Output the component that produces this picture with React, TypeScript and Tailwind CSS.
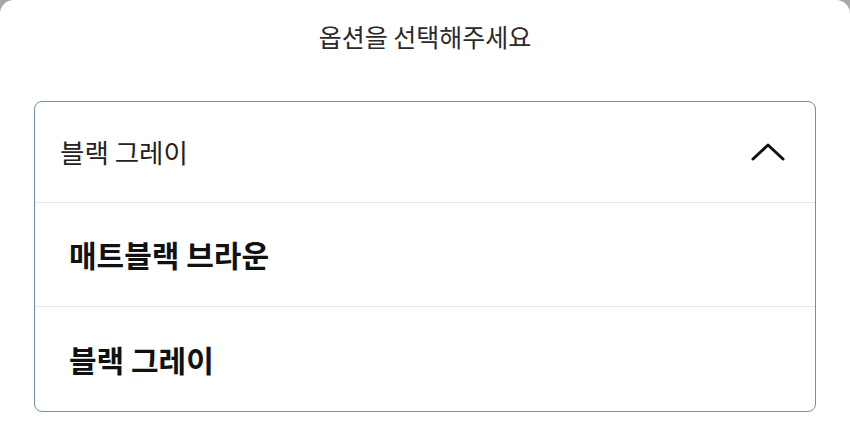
const options = ['매트블랙 브라운', '블랙 그레이'];

export default function App() {
  return (
    <div
      className="w-[850px] h-[436px] bg-[#a8a8a8] overflow-hidden"
      style={{ fontFamily: '"Noto Sans CJK KR", "Noto Sans", sans-serif' }}
    >
      <div className="h-full bg-white rounded-t-[14px] flex flex-col">
        <div className="h-[74px] flex items-center justify-center">
          <h2 className="text-[25px] text-[#2a2a2a] font-normal">옵션을 선택해주세요</h2>
        </div>
        <div className="mx-[34px] mt-[27px] border border-[#6f90ad] rounded-[8px] flex flex-col">
          <button className="h-[101px] flex items-center justify-between pl-[25px] pr-[30px] border-b border-[#e6e6e6]">
            <span className="text-[26.5px] text-[#222] font-normal">블랙 그레이</span>
            <svg width="34" height="20" viewBox="0 0 34 20" fill="none">
              <polyline points="2,17 17,3 32,17" stroke="#111" strokeWidth="3" strokeLinecap="round" strokeLinejoin="round" />
            </svg>
          </button>
          {options.map((opt, i) => (
            <div
              key={opt}
              className={`h-[104px] flex items-center pl-[34px] ${i < options.length - 1 ? 'border-b border-[#e6e6e6]' : ''}`}
            >
              <span className="text-[30px] text-[#111] font-bold">{opt}</span>
            </div>
          ))}
        </div>
      </div>
    </div>
  );
}
